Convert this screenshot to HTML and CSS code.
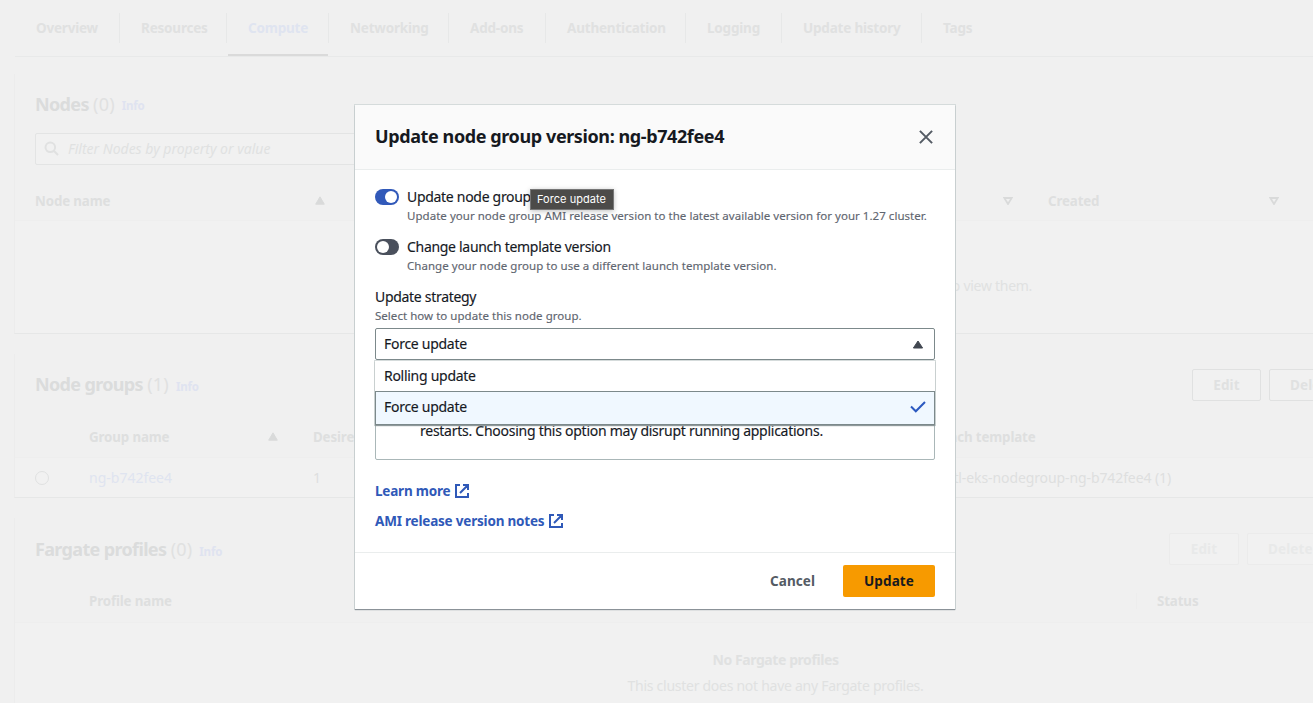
FILE: index.html
```html
<!DOCTYPE html>
<html lang="en">
<head>
<meta charset="utf-8">
<title>Update node group version</title>
<link rel="stylesheet" href="styles.css">
</head>
<body>
<div class="viewport">
<div class="page">
  <nav class="tabs">
    <div class="tab">Overview</div>
    <div class="tab">Resources</div>
    <div class="tab active">Compute</div>
    <div class="tab">Networking</div>
    <div class="tab">Add-ons</div>
    <div class="tab">Authentication</div>
    <div class="tab">Logging</div>
    <div class="tab">Update history</div>
    <div class="tab">Tags</div>
  </nav>

  <section class="card nodes">
    <div class="card-head">
      <h2 class="title"><b>Nodes</b> <span class="count">(0)</span></h2><a class="info">Info</a>
    </div>
    <div class="filter">
      <svg width="16" height="16" viewBox="0 0 16 16" fill="none" stroke="currentColor" stroke-width="2"><circle cx="6.3" cy="6.3" r="4.8"/><path d="M9.8 9.8 14 14"/></svg>
      <span>Filter Nodes by property or value</span>
    </div>
    <div class="row thead nodes-cols">
      <span class="th"><b>Node name</b><svg class="tri" width="10" height="9" viewBox="0 0 10 9"><path d="M5 .8 9.3 8.2H.7Z" fill="currentColor" stroke="currentColor" stroke-linejoin="round"/></svg></span>
      <span class="th end"><svg class="tri" width="10" height="8" viewBox="0 0 10 8"><path d="M1.3 1h7.4L5 7Z" fill="none" stroke="currentColor" stroke-width="1.8"/></svg></span>
      <span class="th"><b>Created</b><svg class="tri" width="10" height="8" viewBox="0 0 10 8"><path d="M1.3 1h7.4L5 7Z" fill="none" stroke="currentColor" stroke-width="1.8"/></svg></span>
    </div>
    <div class="empty">
      <span>This cluster does not have any Nodes, or you don't have permission to view them.</span>
    </div>
  </section>

  <section class="card groups">
    <div class="card-head">
      <h2 class="title"><b>Node groups</b> <span class="count">(1)</span></h2><a class="info">Info</a>
      <div class="actions"><button class="btn">Edit</button><button class="btn">Delete</button></div>
    </div>
    <div class="row thead group-cols">
      <span></span>
      <span class="th"><b>Group name</b><svg class="tri" width="10" height="9" viewBox="0 0 10 9"><path d="M5 .8 9.3 8.2H.7Z" fill="currentColor" stroke="currentColor" stroke-linejoin="round"/></svg></span>
      <b>Desired size</b>
      <b>Launch template</b>
    </div>
    <div class="row group-cols body-row">
      <span class="radio"></span>
      <a class="link">ng-b742fee4</a>
      <span class="dark">1</span>
      <span class="dark template">eksctl-eks-nodegroup-ng-b742fee4 (1)</span>
    </div>
  </section>

  <section class="card fargate">
    <div class="card-head">
      <h2 class="title"><b>Fargate profiles</b> <span class="count">(0)</span></h2><a class="info">Info</a>
      <div class="actions disabled"><button class="btn">Edit</button><button class="btn">Delete</button></div>
    </div>
    <div class="row thead fargate-cols">
      <span></span>
      <b>Profile name</b>
      <b class="divided">Status</b>
    </div>
    <div class="empty">
      <b>No Fargate profiles</b>
      <span>This cluster does not have any Fargate profiles.</span>
    </div>
  </section>
</div>
</div>

<div class="modal" role="dialog">
  <header class="modal-head">
    <h1>Update node group version: ng-b742fee4</h1>
    <svg width="14" height="14" viewBox="0 0 14 14" fill="none" stroke="#545b64" stroke-width="2"><path d="M.9.9 13.1 13.1M13.1.9.9 13.1"/></svg>
  </header>
  <div class="modal-body">
    <div class="toggle-row">
      <span class="toggle on"></span>
      <div><p class="label">Update node group</p><p class="hint">Update your node group AMI release version to the latest available version for your 1.27 cluster.</p></div>
      <span class="tooltip">Force update</span>
    </div>
    <div class="toggle-row">
      <span class="toggle"></span>
      <div><p class="label">Change launch template version</p><p class="hint">Change your node group to use a different launch template version.</p></div>
    </div>
    <div class="field">
      <p class="label">Update strategy</p>
      <p class="hint">Select how to update this node group.</p>
      <div class="select"><span>Force update</span><svg width="12" height="9" viewBox="0 0 12 9"><path d="M6 1 10.6 8H1.4Z" fill="#414750" stroke="#414750" stroke-linejoin="round"/></svg>
        <div class="menu">
          <div class="option"><span>Rolling update</span></div>
          <div class="option selected"><span>Force update</span><svg width="16" height="12" viewBox="0 0 16 12" fill="none" stroke="#2b59c0" stroke-width="2"><path d="M1 5.5 5.8 10.3 15 1"/></svg></div>
        </div>
      </div>
    </div>
    <div class="note">restarts. Choosing this option may disrupt running applications.</div>
    <a class="ext"><span>Learn more</span><svg width="14" height="14" viewBox="0 0 14 14" fill="none" stroke="currentColor" stroke-width="2"><path d="M5 1H1v12h12V9M8 1h5v5M13 1 5 9"/></svg></a>
    <a class="ext"><span>AMI release version notes</span><svg width="14" height="14" viewBox="0 0 14 14" fill="none" stroke="currentColor" stroke-width="2"><path d="M5 1H1v12h12V9M8 1h5v5M13 1 5 9"/></svg></a>
  </div>
  <footer class="modal-foot"><span class="cancel">Cancel</span><button class="primary">Update</button></footer>
</div>
</body>
</html>
```
FILE: styles.css
```css
* { box-sizing: border-box; }
body { margin: 0; height: 703px; overflow: hidden; background: #f0f0f0; font: 14px/22px "Noto Sans", sans-serif; letter-spacing: -.28px; color: #16191f; position: relative; }
h1, h2, p { margin: 0; }
button { font: inherit; font-weight: 700; font-size: 13.5px; letter-spacing: .1px; }

.viewport { width: 100%; height: 703px; overflow: hidden; }
.page { width: 1536px; padding-left: 14px; color: #e0e1e1; }
.tabs { display: grid; grid-template-columns: 105px 107px 102px 120px 97px 140px 96px 140px 80px; height: 57px; margin-left: 1px; border-bottom: 1px solid #e8e9e9; font-weight: 700; font-size: 13.5px; letter-spacing: -.2px; }
.tab { position: relative; padding: 17px 0 0 21px; }
.tab:not(:last-child)::after { content: ""; position: absolute; right: 0; top: 13px; height: 30px; border-right: 1px solid #e7e8e8; }
.tab.active { color: #dfe4f0; }
.tab.active::before { content: ""; position: absolute; left: 1px; right: 1px; bottom: 0; height: 2px; background: #dadada; }

.card { border-left: 1px solid #ececec; border-bottom: 1px solid #e6e7e7; background: #f1f1f1; }
.card-head { display: flex; align-items: center; background: #f0f0f0; padding-left: 20px; height: 62px; }
.title { font-size: 18px; line-height: 22px; font-weight: 400; letter-spacing: -.4px; color: #dbdcdc; }
.title b { letter-spacing: -.65px; }
.count { color: #e0e1e1; letter-spacing: .2px; }
.info { font-size: 11.5px; font-weight: 700; letter-spacing: -.2px; color: #dfe3f0; margin: 5px 0 0 7px; }
.row { display: grid; align-items: center; }
.thead { background: #f0f0f0; border-bottom: 1px solid #eee; font-size: 13.3px; letter-spacing: -.12px; }
.thead b { color: #dedfdf; }
.th { display: flex; align-items: center; justify-content: space-between; }
.th.end { justify-content: flex-end; }
.tri { color: #d9dada; }
.dark { color: #dedfdf; }
.empty { display: flex; flex-direction: column; align-items: center; }

.nodes { margin-top: 17px; height: 260px; }
.nodes .card-head { height: 59px; background: none; }
.filter { display: flex; align-items: center; gap: 8px; width: 600px; height: 32px; margin-left: 20px; padding-left: 8px; border: 1px solid #e3e4e4; border-radius: 2px; font-style: italic; letter-spacing: 0; background: #f1f1f1; }
.nodes { background: linear-gradient(#f0f0f0 147px, #f1f1f1 0); }
.nodes-cols { grid-template-columns: 290px 653px 231px; column-gap: 35px; padding-left: 20px; height: 56px; padding-top: 16px; }
.nodes .empty { padding-top: 54px; }

.groups { margin-top: 20px; height: 144px; }
.groups .card-head { height: 62px; padding-bottom: 1px; }
.actions { display: flex; gap: 8px; margin-left: auto; width: 344px; }
.btn { height: 32px; padding: 0 20px; border: 1px solid #e0e1e1; border-radius: 2px; background: #f1f1f1; color: #e0e1e1; }
.groups .title, .fargate .title { padding-bottom: 1px; }
.actions.disabled { width: 367px; }
.disabled .btn { border-color: #ebebeb; color: #e8e9e9; }
.btn:first-child { width: 69px; }
.disabled .btn:first-child { width: 70px; }
.group-cols { grid-template-columns: 54px 189px 577px 1fr; padding-left: 20px; height: 42px; }
.group-cols > :nth-child(3) { padding-left: 35px; }
.group-cols > :nth-child(4) { padding-left: 70px; }
.body-row { height: 39px; }
.template { letter-spacing: -.1px; }

.fargate { margin-top: 20px; height: 220px; }
.fargate-cols { grid-template-columns: 54px 1047px 1fr; padding-left: 20px; height: 43px; }
.fargate .empty { padding-top: 26px; gap: 4px; letter-spacing: -.27px; }
.fargate .empty b { letter-spacing: -.42px; }
.divided { padding-left: 20px; border-left: 1px solid #ededed; line-height: 16px; }
.radio { width: 14px; height: 14px; border: 1px solid #e0e1e1; border-radius: 50%; }
.link { color: #dfe4f0; letter-spacing: 0; }

.modal { position: absolute; left: 355px; top: 105px; width: 600px; height: 504px; background: #fff; box-shadow: 0 1px 1px #8b9298, 0 0 0 1px #d5dbdb; }
.modal-head { display: flex; justify-content: space-between; align-items: center; height: 65px; padding: 0 22px 0 20px; background: #fafafa; border-bottom: 1px solid #eaeded; }
.modal-head h1 { font-size: 18px; line-height: 22px; font-weight: 700; letter-spacing: -.4px; padding-bottom: 2px; }
.modal-body { height: 382px; padding: 17px 20px 0; -webkit-text-stroke: .15px currentColor; }
.toggle-row { position: relative; display: flex; gap: 8px; height: 50px; }
.toggle { width: 24px; height: 16px; margin-top: 2px; border-radius: 8px; background: #4a505c; padding: 2px; }
.toggle::before { content: ""; display: block; width: 12px; height: 12px; border-radius: 50%; background: #fff; }
.toggle.on { background: #3159b9; }
.toggle.on::before { margin-left: 8px; }
.label { line-height: 20px; letter-spacing: -.3px; width: max-content; }
.hint { font-size: 11.5px; line-height: 18px; letter-spacing: .035px; color: #5f6670; width: max-content; }
.tooltip { position: absolute; left: 155px; top: 2px; width: 84px; height: 21px; border: 1px solid #777; background: #4c4b49; color: #fff; font: 11px/19px Inter, sans-serif; letter-spacing: .05px; padding-left: 6px; box-shadow: 0 1px 5px rgba(0,0,0,.25); -webkit-text-stroke: 0; }
.select { position: relative; display: flex; align-items: center; justify-content: space-between; height: 32px; margin-top: 3px; padding: 0 10px 0 8px; border: 1px solid #7c898b; border-radius: 2px; }
.menu { position: absolute; left: -1px; top: 32px; width: 560px; background: #fff; z-index: 2; box-shadow: 0 1px 1px #8f999b, 0 0 0 1px #d5dbdb; }
.option { display: flex; align-items: center; justify-content: space-between; height: 30px; padding: 0 9px; }
.option.selected { height: 34px; padding: 0 8px 2px; background: #f0f8ff; border: 1px solid #7c898b; }
.note { display: flex; align-items: flex-end; height: 64px; margin: 36px 0 16px; padding: 0 0 17px 44px; border: 1px solid #aab7b8; border-radius: 2px; letter-spacing: -.26px; }
.ext { display: flex; align-items: center; gap: 5px; height: 30px; color: #2f59b8; font-weight: 700; font-size: 13.5px; letter-spacing: -.2px; -webkit-text-stroke: 0; }
.modal-foot { display: flex; justify-content: flex-end; align-items: center; gap: 28px; height: 57px; padding-right: 20px; border-top: 1px solid #eaeded; }
.cancel { font-weight: 700; color: #545b64; font-size: 13.5px; letter-spacing: .05px; }
.primary { width: 92px; height: 32px; border: 0; border-radius: 2px; background: #f79a00; color: #16191f; padding: 0; }
```
